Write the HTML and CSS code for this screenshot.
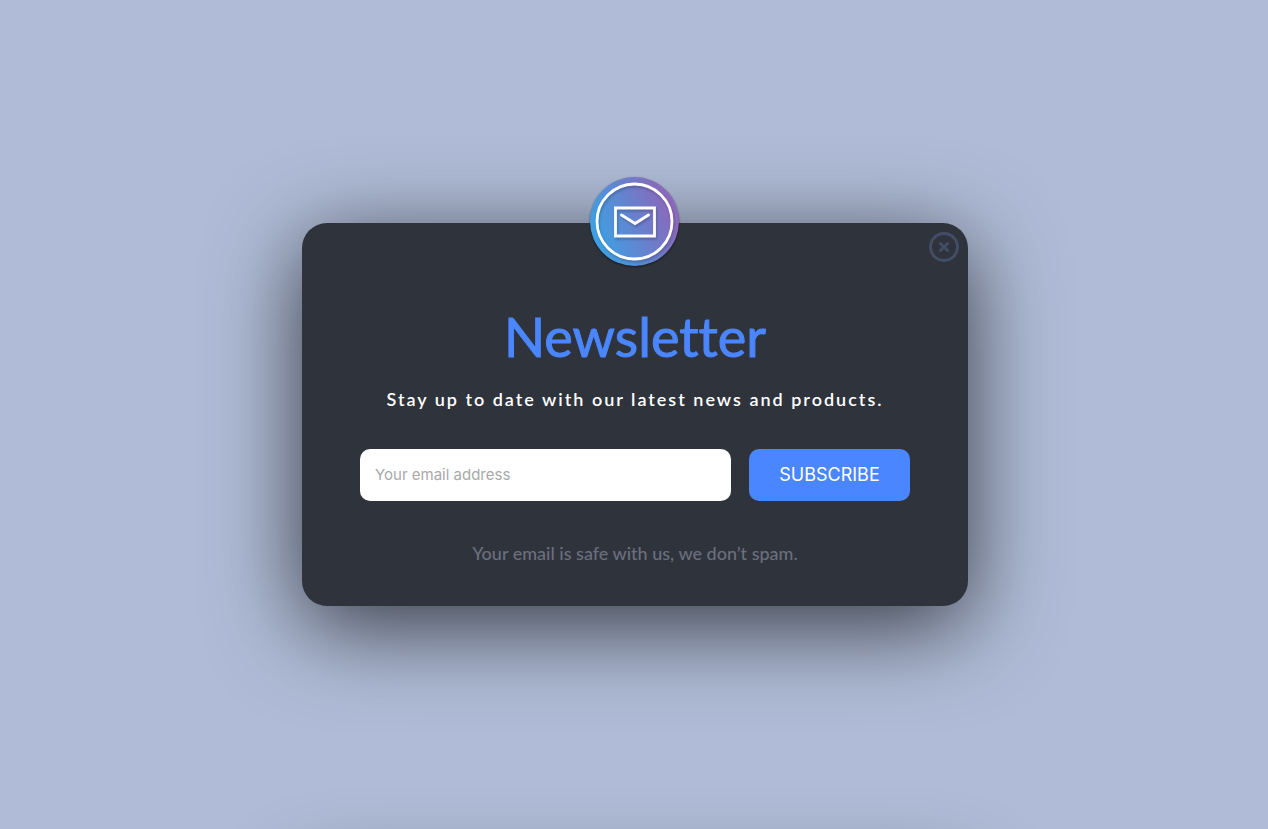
FILE: index.html
```html
<!DOCTYPE html>
<html lang="en">
<head>
<meta charset="utf-8">
<title>Newsletter</title>
<link rel="stylesheet" href="styles.css">
</head>
<body>
<main class="page">
  <section class="card">
    <svg class="badge" viewBox="0 0 96 96" aria-hidden="true">
      <defs>
        <linearGradient id="fill" x1="0" y1="0.7" x2="1" y2="0.3">
          <stop offset="0.08" stop-color="#3e9fe3"/>
          <stop offset="0.9" stop-color="#8a68bb"/>
        </linearGradient>
      </defs>
      <circle class="disc" cx="47.500" cy="48.500" r="44.500" fill="url(#fill)"/>
      <g class="lines">
        <circle cx="47.500" cy="48.500" r="37.500"/>
        <path d="M28.500 35h39v28h-39z"/>
        <path d="M34.500 42l13.500 8.500 13.500-8.500" stroke-linecap="round"/>
      </g>
    </svg>
    <button class="close" type="button" aria-label="Close">
      <svg class="close-icon" viewBox="0 0 30 30" aria-hidden="true">
        <circle cx="15" cy="15" r="13.500"/>
        <path d="M11.500 11.500l7 7M18.500 11.500l-7 7" stroke-linecap="round"/>
      </svg>
    </button>
    <h1 class="title">Newsletter</h1>
    <p class="lead">Stay up to date with our latest news and products.</p>
    <form class="form">
      <input class="email" type="email" placeholder="Your email address" aria-label="Your email address">
      <button class="subscribe" type="button">SUBSCRIBE</button>
    </form>
    <p class="note">Your email is safe with us, we don’t spam.</p>
  </section>
  <div class="next-card"></div>
</main>
</body>
</html>
```
FILE: styles.css
```css
* {
  box-sizing: border-box;
}

body {
  margin: 0;
  background: #b0bcd7;
  font-family: Lato, sans-serif;
  font-variant-ligatures: none;
}

.page {
  position: relative;
  min-height: 100vh;
  display: flex;
  align-items: center;
  justify-content: center;
  padding: 24px 24px 25px 26px;
  overflow: hidden;
}

.card {
  position: relative;
  width: 100%;
  max-width: 666px;
  padding: 80px 58px 41px;
  border-radius: 25px;
  background: #2f333c;
  box-shadow: 0 20px 90px rgba(0, 0, 0, 0.7);
  text-align: center;
}

/* Only the shadow of the following card reaches into view. */
.next-card {
  position: absolute;
  top: calc(100% + 34px);
  left: calc(50% - 332px);
  width: 666px;
  height: 382px;
  border-radius: 25px;
  box-shadow: 0 20px 80px rgba(0, 0, 0, 0.7);
}

.badge {
  position: absolute;
  top: -50px;
  left: calc(50% - 48px);
  width: 96px;
  height: 96px;
}

.disc {
  filter: drop-shadow(0 1px 1px rgba(0, 0, 0, 0.5));
}

.lines {
  fill: none;
  stroke: #fff;
  stroke-width: 2.8;
  filter: drop-shadow(1px 2px 1px rgba(0, 0, 0, 0.2));
}

.close {
  position: absolute;
  top: 9px;
  right: 9px;
  width: 30px;
  height: 30px;
  padding: 0;
  border: 0;
  background: none;
}

.close-icon {
  display: block;
  fill: none;
  stroke: #434d68;
  stroke-width: 3;
}

.title {
  margin: 0;
  color: #4a86ff;
  font-size: 54px;
  line-height: 68px;
  font-weight: 400;
  -webkit-text-stroke: 1px #4a86ff;
}

.lead {
  margin: 16px 0 0;
  color: #fff;
  font-size: 18px;
  line-height: 24px;
  font-weight: 600;
  letter-spacing: 2px;
}

.form {
  display: flex;
  gap: 18px;
  margin-top: 38px;
}

.email {
  flex: 1;
  min-width: 0;
  height: 52px;
  padding: 0 15px;
  border: 0;
  border-radius: 10px;
  background: #fff;
  font: 15px Inter, sans-serif;
}

.email::placeholder {
  color: #a9a9a9;
}

.subscribe {
  width: 161px;
  height: 52px;
  padding: 0;
  border: 0;
  border-radius: 10px;
  background: #4a86ff;
  color: #fff;
  font: 18px Inter, sans-serif;
}

.note {
  margin: 40px 0 0;
  color: #6b6f7d;
  font-size: 18px;
  line-height: 24px;
  font-weight: 500;
}
```
